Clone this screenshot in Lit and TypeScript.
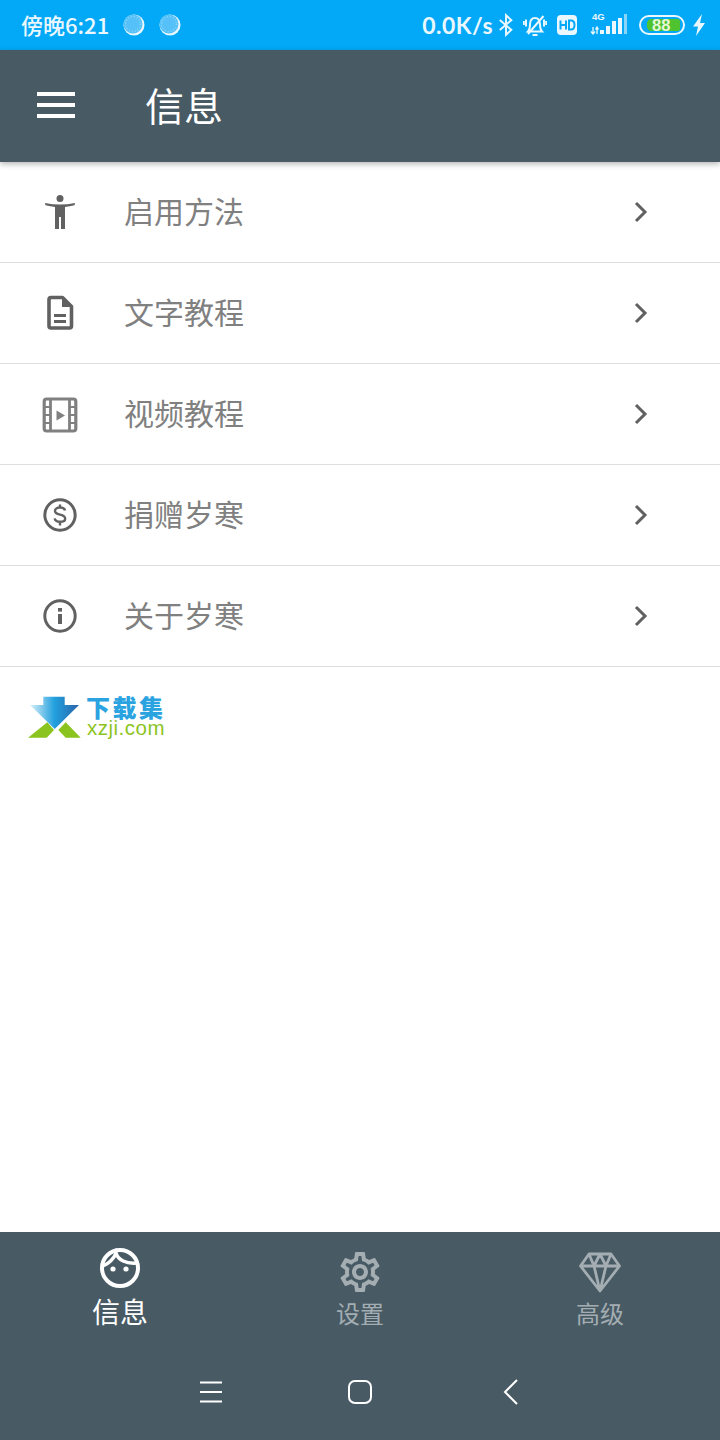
import { LitElement, html, css, svg } from 'lit';
import { customElement } from 'lit/decorators.js';

const gearPath = 'M19.43 12.98c.04-.32.07-.64.07-.98 0-.34-.03-.66-.07-.98l2.11-1.65c.19-.15.24-.42.12-.64l-2-3.46c-.09-.16-.26-.25-.44-.25-.06 0-.12.01-.17.03l-2.49 1c-.52-.4-1.08-.73-1.69-.98l-.38-2.65C14.46 2.18 14.25 2 14 2h-4c-.25 0-.46.18-.49.42l-.38 2.65c-.61.25-1.17.59-1.69.98l-2.49-1c-.06-.02-.12-.03-.18-.03-.17 0-.34.09-.43.25l-2 3.46c-.13.22-.07.49.12.64l2.11 1.65c-.04.32-.07.65-.07.98 0 .33.03.66.07.98l-2.11 1.65c-.19.15-.24.42-.12.64l2 3.46c.09.16.26.25.44.25.06 0 .12-.01.17-.03l2.49-1c.52.4 1.08.73 1.69.98l.38 2.65c.03.24.24.42.49.42h4c.25 0 .46-.18.49-.42l.38-2.65c.61-.25 1.17-.59 1.69-.98l2.49 1c.06.02.12.03.18.03.17 0 .34-.09.43-.25l2-3.46c.12-.22.07-.49-.12-.64l-2.11-1.65zm-1.98-1.71c.04.31.05.52.05.73 0 .21-.02.43-.05.73l-.14 1.13.89.7 1.08.84-.7 1.21-1.27-.51-1.04-.42-.9.68c-.43.32-.84.56-1.25.73l-1.06.43-.16 1.13-.2 1.35h-1.4l-.19-1.35-.16-1.13-1.06-.43c-.43-.18-.83-.41-1.23-.71l-.91-.7-1.06.43-1.27.51-.7-1.21 1.08-.84.89-.7-.14-1.13c-.03-.31-.05-.54-.05-.74s.02-.43.05-.73l.14-1.13-.89-.7-1.08-.84.7-1.21 1.27.51 1.04.42.9-.68c.43-.32.84-.56 1.25-.73l1.06-.43.16-1.13.2-1.35h1.39l.19 1.35.16 1.13 1.06.43c.43.18.83.41 1.23.71l.91.7 1.06-.43 1.27-.51.7 1.21-1.07.85-.89.7.14 1.13zM12 8c-2.21 0-4 1.79-4 4s1.79 4 4 4 4-1.79 4-4-1.79-4-4-4zm0 6c-1.1 0-2-.9-2-2s.9-2 2-2 2 .9 2 2-.9 2-2 2z';

const rowIcons = [
  svg`<circle cx="20" cy="6.5" r="3.5" fill="#616161"/><path fill="#616161" d="M5 11l.5 2.2c3.5.8 6.5 1.4 9.5 1.8v22h4V25h2v12h4V15c3-.4 6-1 9.5-1.8L35 11c-5 1-10 1.500-15 1.500S10 12 5 11z"/>`,
  svg`<path fill="none" stroke="#616161" stroke-width="3.600" stroke-linejoin="round" d="M11 4.500h11.500L31.500 13.500V33a2 2 0 0 1-2 2h-18.500a2 2 0 0 1-2-2V6.500a2 2 0 0 1 2-2z"/><path fill="#616161" d="M22 4l10 10h-10z"/><path stroke="#616161" stroke-width="2.800" d="M14 22.500h12M14 28.500h12"/>`,
  svg`<g fill="none" stroke="#808080"><rect x="4.200" y="5" width="31.600" height="32" rx="2.500" stroke-width="3.200"/><path stroke-width="2.800" d="M10.500 5v32M29.500 5v32"/><path stroke-width="2" d="M4 13h6M4 21h6M4 29h6M30 13h6M30 21h6M30 29h6"/></g><path fill="#808080" d="M16.500 16.500l8.500 5-8.500 5z"/>`,
  svg`<circle cx="20" cy="20" r="15.200" fill="none" stroke="#616161" stroke-width="3"/><path fill="none" stroke="#616161" stroke-width="2.400" d="M25 15.500c-.4-1.900-2.400-3-5-3-2.800 0-5 1.300-5 3.400 0 4.900 10.200 2.400 10.200 7.500 0 2.200-2.300 3.400-5.200 3.400-2.800 0-5-1.200-5.300-3.400M20 9.500v3M20 27v3.500"/>`,
  svg`<circle cx="20" cy="20" r="15.200" fill="none" stroke="#616161" stroke-width="3"/><rect x="18" y="18" width="4" height="10" fill="#616161"/><rect x="18" y="12" width="4" height="3.600" fill="#616161"/>`,
];

const rows = ['启用方法', '文字教程', '视频教程', '捐赠岁寒', '关于岁寒'];

@customElement('app-root')
export class AppRoot extends LitElement {
  static styles = css`
    :host {
      display: flex;
      flex-direction: column;
      width: 720px;
      height: 1440px;
      background: #fff;
      font-family: "Noto Sans CJK SC", "Noto Sans", sans-serif;
      overflow: hidden;
    }
    svg { display: block; flex: none; }

    .status {
      flex: none;
      height: 50px;
      background: #03a9f7;
      color: #eaf7fe;
      display: flex;
      align-items: center;
      padding: 0 14px 0 21px;
      font-size: 22px;
    }
    .clock { width: 102px; font-weight: 500; padding-bottom: 2px; }
    .bubble {
      width: 22px;
      height: 22px;
      margin-right: 14px;
    }
    .speed {
      margin-left: auto;
      font-family: "Lato", sans-serif;
      font-weight: 700;
      font-size: 23px;
      letter-spacing: 0.5px;
      margin-right: 5px;
    }
    .st-bt { margin-right: 9px; }
    .st-bell { margin-right: 10px; }
    .st-hd { margin-right: 13px; }
    .st-signal { margin-right: 11px; }
    .st-batt { margin-right: 7px; }

    .appbar {
      flex: none;
      height: 112px;
      background: #485a64;
      display: flex;
      align-items: center;
      padding-left: 37px;
      box-shadow: 0 2px 6px rgba(0, 0, 0, 0.3);
      position: relative;
    }
    .burger { width: 38px; height: 26px; margin: 0 70px 2px 0; }
    .appbar h1 {
      margin: 0 0 3px;
      color: #fff;
      font-size: 39px;
      font-weight: 400;
      line-height: 1;
    }

    .row {
      height: 100px;
      display: flex;
      align-items: center;
      border-bottom: 1px solid #dedede;
      padding-left: 40px;
    }
    .row .ic { width: 40px; height: 40px; margin-right: 44px; }
    .row span {
      font-size: 30px;
      color: #808080;
      line-height: 1;
      flex: 1;
      padding-bottom: 4px;
    }
    .row .chev { width: 16px; height: 22px; margin-right: 71px; }

    .logo {
      display: flex;
      margin: 29px 0 0 28px;
      height: 44px;
    }
    .logo svg { width: 56px; height: 44px; margin-right: 2px; }
    .logo div { display: flex; flex-direction: column; line-height: 1; }
    .logo b {
      font-size: 24px;
      font-weight: 900;
      letter-spacing: 2.500px;
      color: #2aa3e0;
      height: 22px;
      line-height: 22px;
    }
    .logo i {
      font-family: "Liberation Sans", sans-serif;
      font-style: normal;
      font-size: 20.500px;
      letter-spacing: 0.500px;
      color: #8cc41f;
      line-height: 20px;
      margin-left: 1px;
    }

    .spacer { flex: 1; }

    .bottom {
      flex: none;
      height: 208px;
      background: #485a64;
      display: flex;
      flex-direction: column;
    }
    .tabs { display: flex; height: 118px; }
    .tab {
      flex: 1;
      display: flex;
      flex-direction: column;
      align-items: center;
      color: #a3adb2;
      font-size: 24px;
      line-height: 1;
      padding-top: 16px;
    }
    .tab svg { width: 48px; height: 48px; margin-bottom: 5px; }
    .tab.on { color: #fff; font-size: 28px; }
    .tab.on svg { margin-bottom: 1px; }

    .sysnav {
      flex: 1;
      display: flex;
      align-items: center;
      justify-content: center;
      padding-bottom: 6px;
      padding-left: 2px;
      gap: 121px;
    }
    .sysnav svg { width: 28px; height: 28px; }
    .sysnav .back { margin-left: 2px; }
  `;

  private renderStatusIcons() {
    return html`
      <svg class="st-bt" width="16" height="24" viewBox="0 0 18 24" fill="none" stroke="#eaf7fe" stroke-width="2.200">
        <path d="M2 6.500l13 11-6 5.500V1l6 5.500-13 11"/>
      </svg>
      <svg class="st-bell" width="24" height="24" viewBox="0 0 24 24" fill="none" stroke="#eaf7fe" stroke-width="2">
        <path d="M5 18.500c1.500-1.500 2-3 2-7 0-4 2-6.500 5-6.500s5 2.500 5 6.500c0 4 .5 5.500 2 7zM9.500 22h5M20.500 3L5 21"/>
        <path stroke-width="2" d="M3 6.500v7M.8 8v4M21 6.500v7M23.200 8v4"/>
      </svg>
      <svg class="st-hd" width="20" height="20" viewBox="0 0 20 20">
        <rect width="20" height="20" rx="4" fill="#eaf7fe"/>
        <path fill="none" stroke="#03a9f7" stroke-width="2" d="M3.500 5.500v9M9 5.500v9M3.500 10H9M12 5.500v9h2c2.200 0 3.500-1.800 3.500-4.500S16.200 5.500 14 5.500z"/>
      </svg>
      <svg class="st-signal" width="38" height="30" viewBox="0 -3 38 30">
        <text x="2" y="6.500" font-size="9.500" font-weight="700" font-family="Liberation Sans" fill="#eaf7fe">4G</text>
        <path fill="none" stroke="#eaf7fe" stroke-width="1.300" d="M3 14v7M1 18.500l2 2.500 2-2.500M7 21v-7M5.500 16.500l1.500-2.500 1.500 2.500"/>
        <path fill="#eaf7fe" d="M10 17h4v4h-4zM16 13h4v8h-4zM22 8h4v13h-4zM28 5h4v16h-4z"/>
        <path fill="#8ad6fb" d="M34 1h3v20h-3z"/>
      </svg>
      <svg class="st-batt" width="46" height="20" viewBox="0 0 46 20">
        <rect x="1" y="1" width="44" height="18" rx="9" fill="none" stroke="#eaf7fe" stroke-width="2"/>
        <path fill="#4fc32f" d="M11 4h28a2 2 0 0 1 2 2v8a2 2 0 0 1-2 2H11a6 6 0 0 1-3-6 6 6 0 0 1 3-6z"/>
        <text x="13" y="15.500" font-size="16.500" font-weight="700" font-family="Liberation Sans" fill="#e6f7d8">88</text>
      </svg>
      <svg width="14" height="22" viewBox="0 0 14 22"><path fill="#eaf7fe" d="M10 0L1 12.500h5L4 22l9-13H8z"/></svg>
    `;
  }

  private renderBubble() {
    return html`<svg class="bubble" viewBox="0 0 22 22">
      <circle cx="11" cy="11" r="10.500" fill="#eaf7fe"/>
      <circle cx="10" cy="10" r="9.500" fill="#56c1f8"/>
      <circle cx="10" cy="10" r="7.500" fill="none" stroke="#8ad6fb" stroke-width="1.500" stroke-dasharray="1 2"/>
    </svg>`;
  }

  render() {
    return html`
      <div class="status">
        <div class="clock">傍晚6:21</div>
        ${this.renderBubble()}${this.renderBubble()}
        <div class="speed">0.0K/s</div>
        ${this.renderStatusIcons()}
      </div>

      <header class="appbar">
        <svg class="burger" viewBox="0 0 38 26" fill="#fff">
          <rect y="0" width="38" height="4"/><rect y="11" width="38" height="4"/><rect y="22" width="38" height="4"/>
        </svg>
        <h1>信息</h1>
      </header>

      ${rows.map((label, i) => html`
        <div class="row">
          <svg class="ic" viewBox="0 0 40 40">${rowIcons[i]}</svg>
          <span>${label}</span>
          <svg class="chev" viewBox="0 0 16 22"><path d="M3 2l9 9-9 9" fill="none" stroke="#616161" stroke-width="3"/></svg>
        </div>
      `)}

      <div class="logo">
        <svg viewBox="0 0 56 44">
          <defs>
            <linearGradient id="arrow" x1="0" y1="0" x2="1" y2="0">
              <stop offset="0" stop-color="#d8eff9"/>
              <stop offset="0.5" stop-color="#22a0de"/>
              <stop offset="1" stop-color="#2a64a8"/>
            </linearGradient>
          </defs>
          <path fill="url(#arrow)" d="M15.300 .7h21.400V9H51L26.700 33 2 9h13.300z"/>
          <path fill="#8cc41f" d="M0 41.700l19.300-15.400 6.700 7.700-7.300 7.700zM30.300 34l7.400-7.700 15 15.400H37.700z"/>
        </svg>
        <div><b>下载集</b><i>xzji.com</i></div>
      </div>

      <div class="spacer"></div>

      <div class="bottom">
        <div class="tabs">
          <div class="tab on">
            <svg viewBox="0 0 48 48" fill="none" stroke="#fff" stroke-width="4">
              <circle cx="24" cy="20" r="18"/>
              <path stroke-width="3.500" d="M7 18c5-2 11-7 13-13 2 7 10 11 21 10"/>
              <circle cx="17" cy="21" r="2.600" fill="#fff" stroke="none"/>
              <circle cx="30" cy="21" r="2.600" fill="#fff" stroke="none"/>
            </svg>
            信息
          </div>
          <div class="tab">
            <svg viewBox="0 0 24 24"><path fill="#a3adb2" d="${gearPath}"/></svg>
            设置
          </div>
          <div class="tab">
            <svg viewBox="0 0 48 48" fill="none" stroke="#a3adb2" stroke-width="2.800" stroke-linejoin="round">
              <path d="M13 6h22l8.500 12L24 43 4.500 18zM4.500 18h39M13 6l5 12 6 25 6-25 5-12M18 18l6-12 6 12"/>
            </svg>
            高级
          </div>
        </div>
        <div class="sysnav">
          <svg viewBox="0 0 28 28" stroke="#fff" stroke-width="2"><path d="M3 4.500h22M3 14h22M3 23.500h22"/></svg>
          <svg viewBox="0 0 28 28"><rect x="3" y="3" width="22" height="22" rx="6" fill="none" stroke="#fff" stroke-width="2"/></svg>
          <svg class="back" viewBox="0 0 28 28"><path d="M20 2L8 14l12 12" fill="none" stroke="#fff" stroke-width="2"/></svg>
        </div>
      </div>
    `;
  }
}
